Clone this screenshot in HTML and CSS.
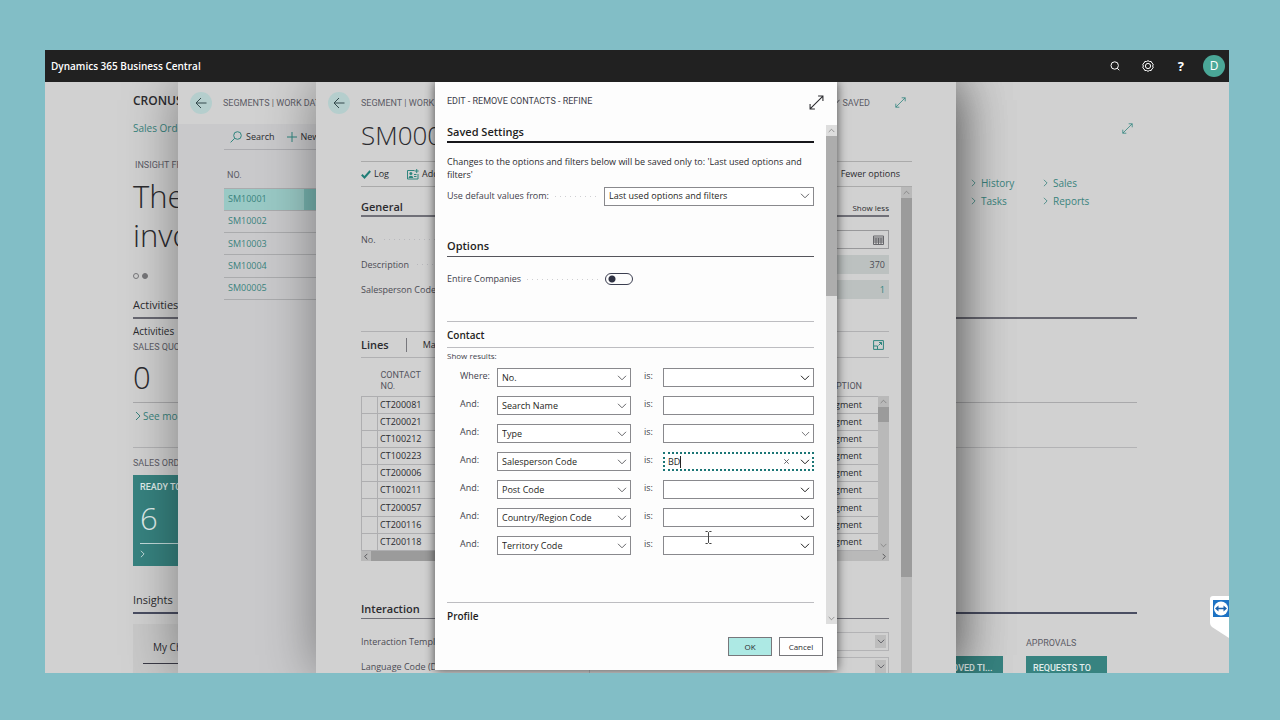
FILE: index.html
```html
<!DOCTYPE html>
<html lang="en">
<head>
<meta charset="utf-8">
<title>Dynamics 365 Business Central</title>
<link rel="stylesheet" href="styles.css">
</head>
<body>
<svg class="sprite" aria-hidden="true">
  <symbol id="chev-down" viewBox="0 0 10 6"><path d="M1 .8 5 4.8 9 .8"/></symbol>
  <symbol id="chev-up" viewBox="0 0 10 6"><path d="M1 5.2 5 1.2 9 5.2"/></symbol>
  <symbol id="chev-right" viewBox="0 0 6 10"><path d="M1 1 5 5 1 9"/></symbol>
  <symbol id="chev-left" viewBox="0 0 6 10"><path d="M5 1 1 5 5 9"/></symbol>
  <symbol id="expand" viewBox="0 0 14 14"><path d="M1 13 13 1M8.5 1H13V5.5M1 8.500V13H5.500"/></symbol>
  <symbol id="back" viewBox="0 0 12 12"><path d="M11.500 6H1M6 1 1 6 6 11"/></symbol>
</svg>
<div class="screen">
  <header class="topbar">
    <span class="brand">Dynamics 365 Business Central</span>
    <nav class="tools">
      <button aria-label="Search"><svg width="10" height="10" viewBox="0 0 10 10"><circle cx="4.700" cy="4.500" r="3.700"/><path d="M7.200 7.200 9.300 9.300"/></svg></button>
      <button aria-label="Settings"><svg width="12" height="12" viewBox="0 0 12 12"><path d="M6 .7 7.500 1.500 9.200 1.500 9.900 3 11.200 4.200 10.700 6 11.200 7.800 9.900 9 9.200 10.500 7.500 10.500 6 11.300 4.500 10.500 2.800 10.500 2.100 9 .8 7.800 1.300 6 .8 4.200 2.100 3 2.800 1.500 4.500 1.500Z"/><circle cx="6" cy="6" r="2.600"/></svg></button>
      <button class="help" aria-label="Help">?</button>
      <button class="avatar" aria-label="Account">D</button>
    </nav>
  </header>

  <div class="workspace">
    <main class="home">
      <h1 class="company">CRONUS</h1>
      <div class="home-nav"><a href="#">Sales Orders</a><svg class="line-icon teal" width="11" height="11"><use href="#expand"/></svg></div>
      <section class="hero">
        <div>
          <div class="caps insight">INSIGHT FROM</div>
          <p class="headline">The<br>invoi</p>
          <div class="dots"><i></i><i class="on"></i></div>
        </div>
        <nav class="actions">
          <a href="#"><svg class="line-icon" width="5" height="8"><use href="#chev-right"/></svg>History</a>
          <a href="#"><svg class="line-icon" width="5" height="8"><use href="#chev-right"/></svg>Sales</a>
          <a href="#"><svg class="line-icon" width="5" height="8"><use href="#chev-right"/></svg>Tasks</a>
          <a href="#"><svg class="line-icon" width="5" height="8"><use href="#chev-right"/></svg>Reports</a>
        </nav>
      </section>
      <h2 class="home-heading activities">Activities</h2>
      <section class="quotes">
        <div class="sub">Activities</div>
        <div class="caps">SALES QUOTES</div>
        <div class="figure">0</div>
        <a class="more" href="#"><svg class="line-icon" width="6" height="10"><use href="#chev-right"/></svg>See more</a>
      </section>
      <section class="orders">
        <div class="caps">SALES ORDERS</div>
        <div class="tile ready"><span>READY TO</span><b>6</b><div class="tile-foot"><svg class="line-icon" width="5" height="8"><use href="#chev-right"/></svg></div></div>
      </section>
      <h2 class="home-heading insights">Insights</h2>
      <section class="bottom">
        <div class="chart-card"><div>My Chart</div></div>
        <div class="cues">
          <div class="cue"><div class="caps">TIME</div><div class="tile"><span>APPROVED TI...</span></div></div>
          <div class="cue"><div class="caps">APPROVALS</div><div class="tile"><span>REQUESTS TO</span></div></div>
        </div>
      </section>
    </main>

    <section class="panel segments">
      <header class="panel-head"><button class="back" aria-label="Back"><svg class="line-icon" width="12" height="12"><use href="#back"/></svg></button><span class="caps">SEGMENTS | WORK DATE</span></header>
      <div class="list-area">
        <div class="list-tools">
          <button><svg class="line-icon teal" width="12" height="12" viewBox="0 0 12 12"><circle cx="7.500" cy="4.500" r="3.800"/><path d="M4.700 7.300.6 11.400"/></svg>Search</button>
          <button><svg class="line-icon teal" width="10" height="10" viewBox="0 0 10 10"><path d="M5 0V10M0 5H10"/></svg>New</button>
        </div>
        <table class="list">
          <thead><tr><th class="caps">NO.</th></tr></thead>
          <tbody>
            <tr class="selected"><td><a href="#">SM10001</a></td></tr>
            <tr><td><a href="#">SM10002</a></td></tr>
            <tr><td><a href="#">SM10003</a></td></tr>
            <tr><td><a href="#">SM10004</a></td></tr>
            <tr><td><a href="#">SM00005</a></td></tr>
          </tbody>
        </table>
      </div>
    </section>

    <section class="panel card">
      <header class="panel-head"><button class="back" aria-label="Back"><svg class="line-icon" width="12" height="12"><use href="#back"/></svg></button><span class="caps">SEGMENT | WORK</span><span class="saved caps"><svg class="line-icon" width="9" height="8" viewBox="0 0 9 8"><path d="M.5 4.500 3 7 8.500.8"/></svg>SAVED</span><svg class="line-icon teal" width="11" height="11"><use href="#expand"/></svg></header>
      <div class="card-area">
        <h1 class="record">SM000</h1>
        <div class="card-tools">
          <button><svg class="line-icon check" width="10" height="9" viewBox="0 0 10 9"><path d="M.8 4.800 3.500 7.500 9.200 1"/></svg>Log</button>
          <button class="add"><svg width="12" height="11" viewBox="0 0 12 11"><path class="stroke" d="M7.500 1.500H.5V10H11V5"/><path class="stroke" d="M9.700 0V4M7.700 2H11.700M7 5.500H9.500M7 7.500H9.500"/><circle cx="3.900" cy="4.600" r="1.500"/><path d="M1.600 9C1.600 6 6.200 6 6.200 9Z"/></svg>Add</button>
          <button class="fewer">Fewer options</button>
        </div>
        <div class="card-scroll">
          <div class="card-body">
            <div class="section-head strong"><h2>General</h2><button>Show less</button></div>
            <div class="field"><label for="seg-no">No.</label><i class="leader"></i><span class="box"><input id="seg-no"><svg class="calendar" width="11" height="10" viewBox="0 0 11 10"><path d="M.5 1H10.500V9.500H.5ZM.5 3H10.500M3 3V9M5.500 3V9M8 3V9M1 5H10M1 7H10"/></svg></span></div>
            <div class="field"><label for="seg-desc">Description</label><i class="leader"></i><span class="box filled"><input id="seg-desc" value="370" readonly></span></div>
            <div class="field"><label for="seg-sales">Salesperson Code</label><i class="leader"></i><span class="box filled link"><input id="seg-sales" value="1" readonly></span></div>
            <div class="lines-head"><h2>Lines</h2><button>Man</button><svg class="pop line-icon teal" width="11" height="10" viewBox="0 0 11 10"><path d="M.6.6H10.400V9.400H.6ZM.6 6H4.500V9.400M5.500 5.500 8.500 2.500M6 2.500H8.500V5"/></svg></div>
            <div class="grid">
              <table>
                <thead><tr><th></th><th>CONTACT<br>NO.</th><th class="r">DESCRIPTION</th></tr></thead>
                <tbody>
                  <tr><td></td><td>CT200081</td><td class="r">Segment</td></tr>
                  <tr><td></td><td>CT200021</td><td class="r">Segment</td></tr>
                  <tr><td></td><td>CT100212</td><td class="r">Segment</td></tr>
                  <tr><td></td><td>CT100223</td><td class="r">Segment</td></tr>
                  <tr><td></td><td>CT200006</td><td class="r">Segment</td></tr>
                  <tr><td></td><td>CT100211</td><td class="r">Segment</td></tr>
                  <tr><td></td><td>CT200057</td><td class="r">Segment</td></tr>
                  <tr><td></td><td>CT200116</td><td class="r">Segment</td></tr>
                  <tr><td></td><td>CT200118</td><td class="r">Segment</td></tr>
                </tbody>
              </table>
              <div class="vbar grid-v"><svg class="line-icon" width="7" height="5"><use href="#chev-up"/></svg><i></i><svg class="line-icon end" width="7" height="5"><use href="#chev-down"/></svg></div>
              <div class="hbar"><svg class="line-icon" width="4" height="7"><use href="#chev-left"/></svg><i></i><svg class="line-icon" width="4" height="7"><use href="#chev-right"/></svg></div>
            </div>
            <div class="section-head interaction"><h2>Interaction</h2></div>
            <div class="field"><label for="tmpl">Interaction Templa</label><i class="leader"></i><span class="box pick"><input id="tmpl"><span><svg class="line-icon" width="8" height="5"><use href="#chev-down"/></svg></span></span></div>
            <div class="field"><label for="lang">Language Code (D</label><i class="leader"></i><span class="box pick"><input id="lang"><span><svg class="line-icon" width="8" height="5"><use href="#chev-down"/></svg></span></span></div>
          </div>
          <div class="vbar card-v"><svg class="line-icon" width="7" height="5"><use href="#chev-up"/></svg><i></i></div>
        </div>
      </div>
    </section>

    <section class="dialog" role="dialog" aria-labelledby="dlg-title">
      <header class="dialog-head"><h1 id="dlg-title">EDIT - REMOVE CONTACTS - REFINE</h1><button aria-label="Expand"><svg class="line-icon" width="15" height="15"><use href="#expand"/></svg></button></header>
      <div class="dialog-scroll">
        <form class="dialog-body" id="refine">
          <h2 class="rule-thick">Saved Settings</h2>
          <p class="note">Changes to the options and filters below will be saved only to: 'Last used options and filters'</p>
          <div class="option"><label for="defaults">Use default values from:</label><i class="leader"></i><span class="pickbox"><select id="defaults"><option>Last used options and filters</option></select><svg class="line-icon" width="10" height="6"><use href="#chev-down"/></svg></span></div>
          <h2 class="rule options">Options</h2>
          <div class="option entire"><label for="entire">Entire Companies</label><i class="leader"></i><span class="toggle-cell"><input type="checkbox" id="entire" class="toggle"></span></div>
          <h2 class="contact">Contact</h2>
          <div class="results">Show results:</div>
          <div class="filters">
            <div class="filter"><label for="f1">Where:</label><span class="pickbox"><select id="f1"><option>No.</option></select><svg class="line-icon" width="10" height="6"><use href="#chev-down"/></svg></span><label for="v1">is:</label><span class="pickbox"><input id="v1"><svg class="line-icon dark" width="10" height="6"><use href="#chev-down"/></svg></span></div>
            <div class="filter"><label for="f2">And:</label><span class="pickbox"><select id="f2"><option>Search Name</option></select><svg class="line-icon" width="10" height="6"><use href="#chev-down"/></svg></span><label for="v2">is:</label><span class="pickbox"><input id="v2"></span></div>
            <div class="filter"><label for="f3">And:</label><span class="pickbox"><select id="f3"><option>Type</option></select><svg class="line-icon" width="10" height="6"><use href="#chev-down"/></svg></span><label for="v3">is:</label><span class="pickbox"><select id="v3"><option></option></select><svg class="line-icon" width="9" height="6"><use href="#chev-down"/></svg></span></div>
            <div class="filter"><label for="f4">And:</label><span class="pickbox"><select id="f4"><option>Salesperson Code</option></select><svg class="line-icon" width="10" height="6"><use href="#chev-down"/></svg></span><label for="v4">is:</label><span class="pickbox active"><input id="v4" value="BD"><i class="caret"></i><button type="button" class="clear" aria-label="Clear"><svg class="line-icon" width="5" height="5" viewBox="0 0 5 5"><path d="M.3.3 4.700 4.700M4.700.3.3 4.700"/></svg></button><svg class="line-icon dark" width="10" height="6"><use href="#chev-down"/></svg></span></div>
            <div class="filter"><label for="f5">And:</label><span class="pickbox"><select id="f5"><option>Post Code</option></select><svg class="line-icon" width="10" height="6"><use href="#chev-down"/></svg></span><label for="v5">is:</label><span class="pickbox"><input id="v5"><svg class="line-icon dark" width="10" height="6"><use href="#chev-down"/></svg></span></div>
            <div class="filter"><label for="f6">And:</label><span class="pickbox"><select id="f6"><option>Country/Region Code</option></select><svg class="line-icon" width="10" height="6"><use href="#chev-down"/></svg></span><label for="v6">is:</label><span class="pickbox"><input id="v6"><svg class="line-icon dark" width="10" height="6"><use href="#chev-down"/></svg></span></div>
            <div class="filter"><label for="f7">And:</label><span class="pickbox"><select id="f7"><option>Territory Code</option></select><svg class="line-icon" width="10" height="6"><use href="#chev-down"/></svg></span><label for="v7">is:</label><span class="pickbox"><input id="v7"><svg class="line-icon dark" width="10" height="6"><use href="#chev-down"/></svg></span></div>
          </div>
          <h2 class="profile">Profile</h2>
        </form>
        <div class="vbar dialog-v"><svg class="line-icon" width="7" height="5"><use href="#chev-up"/></svg><i></i><svg class="line-icon end" width="7" height="5"><use href="#chev-down"/></svg></div>
      </div>
      <footer class="dialog-foot"><button class="primary">OK</button><button>Cancel</button></footer>
      <svg class="ibeam" width="7" height="13" viewBox="0 0 7 13"><path d="M.5.5H2.500L3.500 1.500 4.500.5H6.500M3.500 1.500V11.500M.5 12.500H2.500L3.500 11.500 4.500 12.500H6.500"/></svg>
    </section>

    <svg class="remote" width="19" height="42" viewBox="0 0 19 42"><path d="M3 0H19V42L2 31Q0 29.500 0 27V3Q0 0 3 0Z" fill="#fff"/><path d="M3 4H19V21H3Z" fill="#1c72c4"/><circle cx="11" cy="12.500" r="7" fill="#fff"/><path d="M5 12.500 8.500 9.500V11.700H13.500V9.500L17 12.500 13.500 15.500V13.300H8.500V15.500Z" fill="#1c62ac"/></svg>
  </div>
</div>
</body>
</html>
```
FILE: styles.css
```css
* { box-sizing: border-box; }
body {
  margin: 0;
  height: 100vh;
  padding: 50px 51px 47px 45px;
  background: #82bec6;
  color: #2b2b2f;
  font: 9px/14px "Open Sans", "Noto Sans", sans-serif;
}
h1, h2, p { margin: 0; font-weight: 400; }
a { color: #39837d; text-decoration: none; }
button { margin: 0; padding: 0; border: 0; background: none; color: inherit; font: inherit; }
input, select { font: inherit; color: inherit; margin: 0; }
table { border-collapse: collapse; }
.sprite { position: absolute; width: 0; height: 0; }
.line-icon { fill: none; stroke: currentColor; stroke-width: 1; flex: none; }
.teal { color: #2f857e; }
.caps { font-family: Roboto, sans-serif; font-size: 9px; font-weight: 400; color: #5c5c66; }

.screen { height: 100%; display: flex; flex-direction: column; overflow: hidden; background: #d1d1d1; }
.topbar { flex: none; height: 32px; padding: 0 4px 0 6px; display: flex; align-items: center; justify-content: space-between; background: #212121; color: #fff; }
.brand { font-size: 10px; font-weight: 600; }
.tools { display: flex; align-items: center; gap: 22px; }
.tools button { display: flex; }
.tools svg { fill: none; stroke: #fff; }
.tools .help { margin-left: 2px; font-size: 13px; font-weight: 700; }
.tools .avatar { width: 22px; height: 22px; margin-left: -3px; align-items: center; justify-content: center; border-radius: 50%; background: #4aa797; font-size: 12px; }

.workspace { position: relative; flex: 1; overflow: hidden; }

.home { padding: 9px 92px 0 88px; }
.company { font-size: 12px; line-height: 20px; font-weight: 600; }
.home-nav { display: flex; justify-content: space-between; align-items: center; margin-top: 7px; padding-right: 4px; font-size: 10px; line-height: 20px; }
.hero { display: flex; justify-content: space-between; padding-top: 20px; }
.insight { padding-left: 2px; }
.headline { margin-top: 5px; font-size: 31px; line-height: 39px; font-weight: 300; }
.dots { display: flex; gap: 3px; margin: 18px 0 16px; }
.dots i { width: 6px; height: 6px; border: 1px solid #77777a; border-radius: 50%; }
.dots .on { background: #77777a; }
.actions { display: grid; grid-template-columns: 72px 94px; grid-auto-rows: 18px; padding-top: 16px; align-content: start; font-size: 10px; }
.actions a { display: flex; align-items: center; gap: 5px; }
.home-heading { height: 24px; border-bottom: 2px solid #686872; font-size: 11px; line-height: 20px; }
.quotes { height: 128px; padding-top: 5px; font-size: 10px; }
.quotes .caps { margin-top: 2px; }
.figure { font-size: 31px; line-height: 47px; font-weight: 300; border-bottom: 1px solid #a9a9ab; height: 49px; }
.more { display: flex; align-items: center; gap: 2px; height: 25px; padding-left: 2px; }
.orders { border-top: 1px solid #b3b3b5; padding-top: 8px; height: 143px; }
.tile { width: 81px; background: #378380; color: #e1eeed; font-family: Roboto, sans-serif; font-size: 9px; font-weight: 500; padding: 5px 7px; white-space: nowrap; }
.ready { margin-top: 5px; height: 91px; }
.ready b { display: block; font: 300 31px/45px "Open Sans", sans-serif; margin: 2px 0; }
.tile-foot { border-top: 1px solid #c3dcdb; height: 22px; padding-top: 6px; line-height: 8px; }
.insights { border-color: #4a4e62; }
.bottom { display: flex; justify-content: space-between; padding-top: 10px; }
.chart-card { width: 300px; background: #c9c9c9; padding: 12px 10px 20px; font-size: 10px; }
.chart-card div { padding-left: 10px; line-height: 22px; height: 28px; border-bottom: 1px solid #3a3a46; }
.cues { display: flex; gap: 23px; padding: 12px 30px 0 0; }
.cue .tile { margin-top: 6px; height: 40px; }

.panel { position: absolute; top: 0; bottom: 0; right: 273px; overflow: visible; background: #d1d1d1; box-shadow: 0 0 50px rgba(0, 0, 0, .4); white-space: nowrap; }
.segments { left: 133px; }
.card { left: 271px; }
.panel-head { display: flex; align-items: center; height: 42px; padding: 0 50px 1px 12px; gap: 11px; }
.back { width: 22px; height: 22px; border-radius: 50%; display: flex; align-items: center; justify-content: center; background: #b5cecd; color: #33494c; }
.saved { margin-left: auto; display: flex; align-items: center; gap: 2px; padding-right: 14px; }
.list-area { background: #c9c9cb; height: calc(100% - 42px); padding-left: 46px; }
.list-tools { display: flex; gap: 12px; height: 26px; padding-left: 6px; border-bottom: 1px solid #acacb0; }
.list-tools button { display: flex; align-items: center; gap: 4px; }
.list { width: 100%; height: 150px; line-height: 14px; }
.list th { text-align: left; height: 38px; padding: 12px 3px 0; }
.list td { padding: 0 4px; border-top: 1px solid #aaabad; border-bottom: 1px solid #aaabad; }
.list .selected { background: linear-gradient(90deg, #99c9c5 80px, #78b4b0 80px); }

.card-area { padding: 0 44px 0 45px; height: calc(100% - 42px); display: flex; flex-direction: column; }
.record { height: 38px; font-size: 26px; line-height: 22px; font-weight: 300; border-bottom: 1px solid #aaa; }
.card-tools { display: flex; height: 25px; gap: 18px; border-bottom: 1px solid #aaa; }
.card-tools button { display: flex; align-items: center; gap: 3px; }
.check { color: #1f7d76; stroke-width: 2; }
.add svg { fill: #2f857e; }
.add .stroke { fill: none; stroke: #2f857e; }
.card-tools .fewer { margin-left: auto; padding-right: 12px; }
.card-scroll { flex: 1; min-height: 0; display: flex; justify-content: space-between; }
.card-body { flex: 1; margin-right: 12px; }
.vbar { flex: none; width: 11px; background: #b9b9b9; display: flex; flex-direction: column; align-items: center; color: #777; }
.vbar svg { margin: 3px 0; }
.vbar i { width: 100%; background: #9b9b9b; }
.card-v i { height: 379px; }
.section-head { display: flex; justify-content: space-between; align-items: center; height: 30px; padding-top: 11px; border-bottom: 1px solid #707078; }
.section-head h2, .lines-head h2 { font-size: 11px; font-weight: 600; }
.section-head.strong { border-bottom-width: 2px; margin-bottom: 10px; }
.section-head button { font-size: 8px; padding-top: 2px; }
.field { display: flex; align-items: center; height: 25px; color: #4c4c54; }
.leader { flex: 1; height: 1px; margin: 0 8px; background: repeating-linear-gradient(90deg, #b8b8bc 0 1px, transparent 1px 5px); }
.box { width: 300px; height: 19px; display: flex; align-items: center; border: 1px solid #98989a; padding-right: 4px; }
.box input { flex: 1; min-width: 0; border: 0; background: none; text-align: right; padding: 0; }
.filled { background: #bcc1c0; border-color: #bcc1c0; padding-right: 3px; }
.link { color: #2f857e; }
.calendar { fill: none; stroke: #66666a; }
.pick { border-color: #b3b3b5; padding-right: 2px; }
.pick span { width: 11px; height: 13px; display: flex; align-items: center; justify-content: center; background: #bdbdbd; }
.lines-head { display: flex; align-items: center; height: 27px; margin-top: 29px; border: solid #b0b0b2; border-width: 1px 0; }
.lines-head button { margin-left: 17px; padding-left: 16px; border-left: 1px solid #77777c; }
.pop { margin-left: auto; margin-right: 5px; stroke-width: 1; }
.grid { display: grid; grid-template-columns: 1fr 11px; }
.grid table { width: 100%; height: 193px; grid-row: 1; }
.grid th { height: 38px; padding: 0 3px 4px; text-align: left; vertical-align: bottom; font: 400 9px/11px Roboto, sans-serif; color: #55555f; }
.grid th:first-child { width: 16px; }
.grid td { padding: 0 2px; border: 1px solid #aeaeb0; line-height: 12px; }
.grid td.r { border-right: 0; }
.grid td.r, .grid th.r { text-align: right; padding-right: 16px; }
.grid-v { margin-top: 38px; }
.grid-v i { height: 15px; }
.vbar .end { margin-top: auto; }
.hbar { grid-column: 1 / 3; height: 10px; display: flex; align-items: center; gap: 3px; padding: 0 3px; background: #b9b9b9; }
.hbar i { width: 440px; height: 100%; background: #9b9b9b; margin-right: auto; }
.interaction { margin: 28px 0 10px; }

.dialog { position: absolute; left: 390px; right: 392px; top: 0; bottom: 3px; display: flex; flex-direction: column; background: #fdfdfd; box-shadow: 0 0 10px rgba(0, 0, 0, .65); }
.dialog-head { flex: none; display: flex; justify-content: space-between; align-items: center; height: 42px; padding: 0 13px 4px 12px; }
.dialog-head h1 { font: 400 9px/14px Roboto, sans-serif; color: #3e3e4a; }
.dialog-head button { padding-top: 2px; display: flex; }
.dialog-scroll { flex: 1; min-height: 0; display: flex; }
.dialog-body { flex: 1; padding: 0 12px; overflow: hidden; }
.dialog-body h2 { font-size: 11px; font-weight: 600; color: #1e1e22; }
.rule-thick { height: 19px; line-height: 16px; border-bottom: 2px solid #17171b; }
.note { padding-top: 12px; line-height: 13px; }
.option { display: flex; align-items: center; height: 20px; margin-top: 5px; color: #3f3f4c; }
.option .leader { background: repeating-linear-gradient(90deg, #cfcfd2 0 1px, transparent 1px 5px); margin: 0 6px; }
.option .pickbox, .toggle-cell { width: 210px; }
.pickbox { position: relative; display: flex; align-items: center; height: 19px; padding: 0 3px 0 4px; border: 1px solid #89898d; background: #fff; color: #1f1f23; }
.pickbox select, .pickbox input { flex: 1; min-width: 0; height: 17px; padding: 0; border: 0; background: none; appearance: none; outline: 0; }
.pickbox svg { color: #66666a; }
.pickbox .dark { color: #222; }
.options { margin-top: 33px; height: 18px; line-height: 14px; border-bottom: 1px solid #55555c; }
.entire { margin-top: 12px; }
.toggle-cell { display: flex; padding-left: 1px; }
.toggle { appearance: none; width: 28px; height: 12px; border: 1px solid #3b3e50; border-radius: 6px; background: radial-gradient(circle at 6px 5px, #303344 3px, transparent 4px); }
.dialog-body .contact, .dialog-body .profile { font-size: 10px; }
.contact { height: 27px; margin-top: 32px; line-height: 26px; border: solid #bdbdc1; border-width: 1px 0; }
.results { margin-top: 2px; font-size: 8px; line-height: 12px; color: #3f3f4c; }
.filters { display: grid; gap: 9px; margin-top: 6px; padding-left: 13px; }
.filter { display: grid; grid-template-columns: 37px 134px 32px 1fr; line-height: 15px; color: #3f3f4c; }
.filter label + .pickbox { line-height: normal; }
.filter label:nth-of-type(2) { padding-left: 13px; }
.active { border: 2px dotted #1b7676; padding: 0 2px 0 3px; }
.caret { position: absolute; left: 15px; top: 2px; width: 1px; height: 12px; background: #222; }
.clear { display: flex; margin-right: 11px; }
.profile { height: 26px; margin-top: 47px; line-height: 26px; border-top: 1px solid #bdbdc1; }
.dialog-v { background: #dedede; margin-top: 1px; }
.dialog-v i { height: 160px; background: #adadad; }
.dialog-foot { flex: none; display: flex; justify-content: flex-end; align-items: flex-start; gap: 7px; height: 46px; padding: 13px 14px 0; }
.dialog-foot button { width: 44px; height: 19px; border: 1px solid #77777b; background: #fff; font-size: 8px; }
.dialog-foot .primary { background: #ade9e4; }
.ibeam { position: absolute; left: 270px; top: 449px; fill: none; stroke: #444; }
.remote { position: absolute; right: 0; top: 514px; }
```
